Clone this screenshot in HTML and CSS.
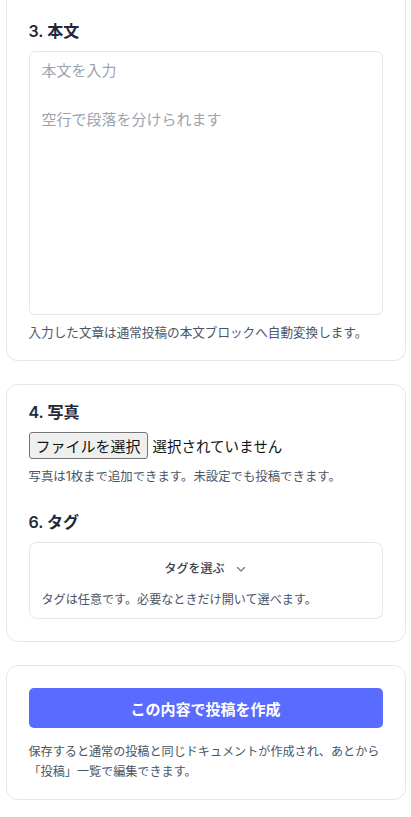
FILE: index.html
```html
<!doctype html>
<html lang="ja">
  <head>
    <meta charset="utf-8">
    <title>新規投稿</title>
    <link rel="stylesheet" href="styles.css">
  </head>
  <body>
    <main class="page">
      <section class="card card-cut">
        <div class="field">
          <h2 class="field-title">3. 本文</h2>
          <textarea class="body-input" placeholder="本文を入力&#10;&#10;空行で段落を分けられます"></textarea>
          <p class="hint hint-wide">入力した文章は通常投稿の本文ブロックへ自動変換します。</p>
        </div>
      </section>

      <section class="card card-tall">
        <div class="field">
          <h2 class="field-title">4. 写真</h2>
          <label class="file-picker">
            <input type="file" class="file-input" accept="image/*">
            <span class="file-button">ファイルを選択</span>
            <span class="file-name">選択されていません</span>
          </label>
          <p class="hint hint-mid">写真は1枚まで追加できます。未設定でも投稿できます。</p>
        </div>
        <div class="field field-next">
          <h2 class="field-title">6. タグ</h2>
          <details class="tag-box">
            <summary class="tag-summary">
              タグを選ぶ
              <svg class="chevron" width="12" height="12" viewBox="0 0 12 12"><path d="M2.5 4.5 L6 8 L9.5 4.5" fill="none" stroke="#6b7280" stroke-width="1.1" stroke-linecap="round" stroke-linejoin="round"/></svg>
            </summary>
          </details>
          <p class="hint tag-hint">タグは任意です。必要なときだけ開いて選べます。</p>
        </div>
      </section>

      <section class="card">
        <button type="button" class="submit">この内容で投稿を作成</button>
        <p class="hint submit-note">保存すると通常の投稿と同じドキュメントが作成され、あとから「投稿」一覧で編集できます。</p>
      </section>
    </main>
  </body>
</html>
```

FILE: styles.css
```css
body {
  margin: 0;
  background: #fff;
  color: #1f2937;
  font-family: Inter, "Noto Sans CJK JP", sans-serif;
}
.page {
  max-width: 400px;
  margin: 0 auto;
  display: flex;
  flex-direction: column;
  gap: 23px;
  padding-bottom: 24px;
}
.card {
  background: #fff;
  border: 1px solid #e5e7eb;
  border-radius: 12px;
  padding: 17px 22px 17px;
}
.card-cut {
  border-top: 0;
  border-top-left-radius: 0;
  border-top-right-radius: 0;
  padding-top: 21px;
}
.card-tall {
  padding-bottom: 22px;
}
.field-title {
  margin: 0 0 9px;
  font-size: 16px;
  line-height: 21px;
  font-weight: 600;
  color: #1f2937;
}
.field-next {
  margin-top: 25px;
}
.body-input {
  display: block;
  box-sizing: border-box;
  width: 100%;
  height: 264px;
  margin: 0;
  padding: 7px 12px;
  border: 1px solid #e5e7eb;
  border-radius: 6px;
  font-family: inherit;
  font-size: 15px;
  line-height: 24.5px;
  color: #1f2937;
  resize: none;
}
.body-input::placeholder {
  color: #9ca3af;
}
.hint {
  margin: 8px 0 0;
  font-size: 12.1px;
  line-height: 20px;
  color: #4b5563;
}
.hint-wide {
  font-size: 12.6px;
}
.hint-mid {
  font-size: 12.4px;
}
.file-picker {
  display: flex;
  align-items: center;
  gap: 5px;
  margin-top: 1px;
  font-size: 15px;
  color: #111;
  cursor: pointer;
}
.file-input {
  display: none;
}
.file-button {
  box-sizing: border-box;
  height: 27px;
  padding: 0 6px;
  display: flex;
  align-items: center;
  background: #efefef;
  border: 1px solid #767676;
  border-radius: 3px;
  color: #111;
}
.file-name {
  font-size: 14.5px;
}
.tag-box {
  border: 1px solid #e5e7eb;
  border-radius: 8px 8px 0 0;
  border-bottom: 0;
  padding: 0 12px;
}
.tag-summary {
  list-style: none;
  display: flex;
  justify-content: center;
  align-items: center;
  gap: 10px;
  padding: 17px 0 12px;
  font-size: 12px;
  line-height: 18px;
  font-weight: 500;
  color: #374151;
  cursor: pointer;
}
.tag-summary::-webkit-details-marker {
  display: none;
}
.tag-hint {
  margin: 0;
  padding: 0 12px 8px;
  border: 1px solid #e5e7eb;
  border-top: 0;
  border-radius: 0 0 8px 8px;
}
.submit {
  display: block;
  width: 100%;
  height: 40px;
  margin-top: 5px;
  border: 0;
  border-radius: 5px;
  background: #5a6cff;
  color: #fff;
  font-family: inherit;
  font-size: 15px;
  font-weight: 700;
}
.submit-note {
  margin-top: 14px;
}
```
